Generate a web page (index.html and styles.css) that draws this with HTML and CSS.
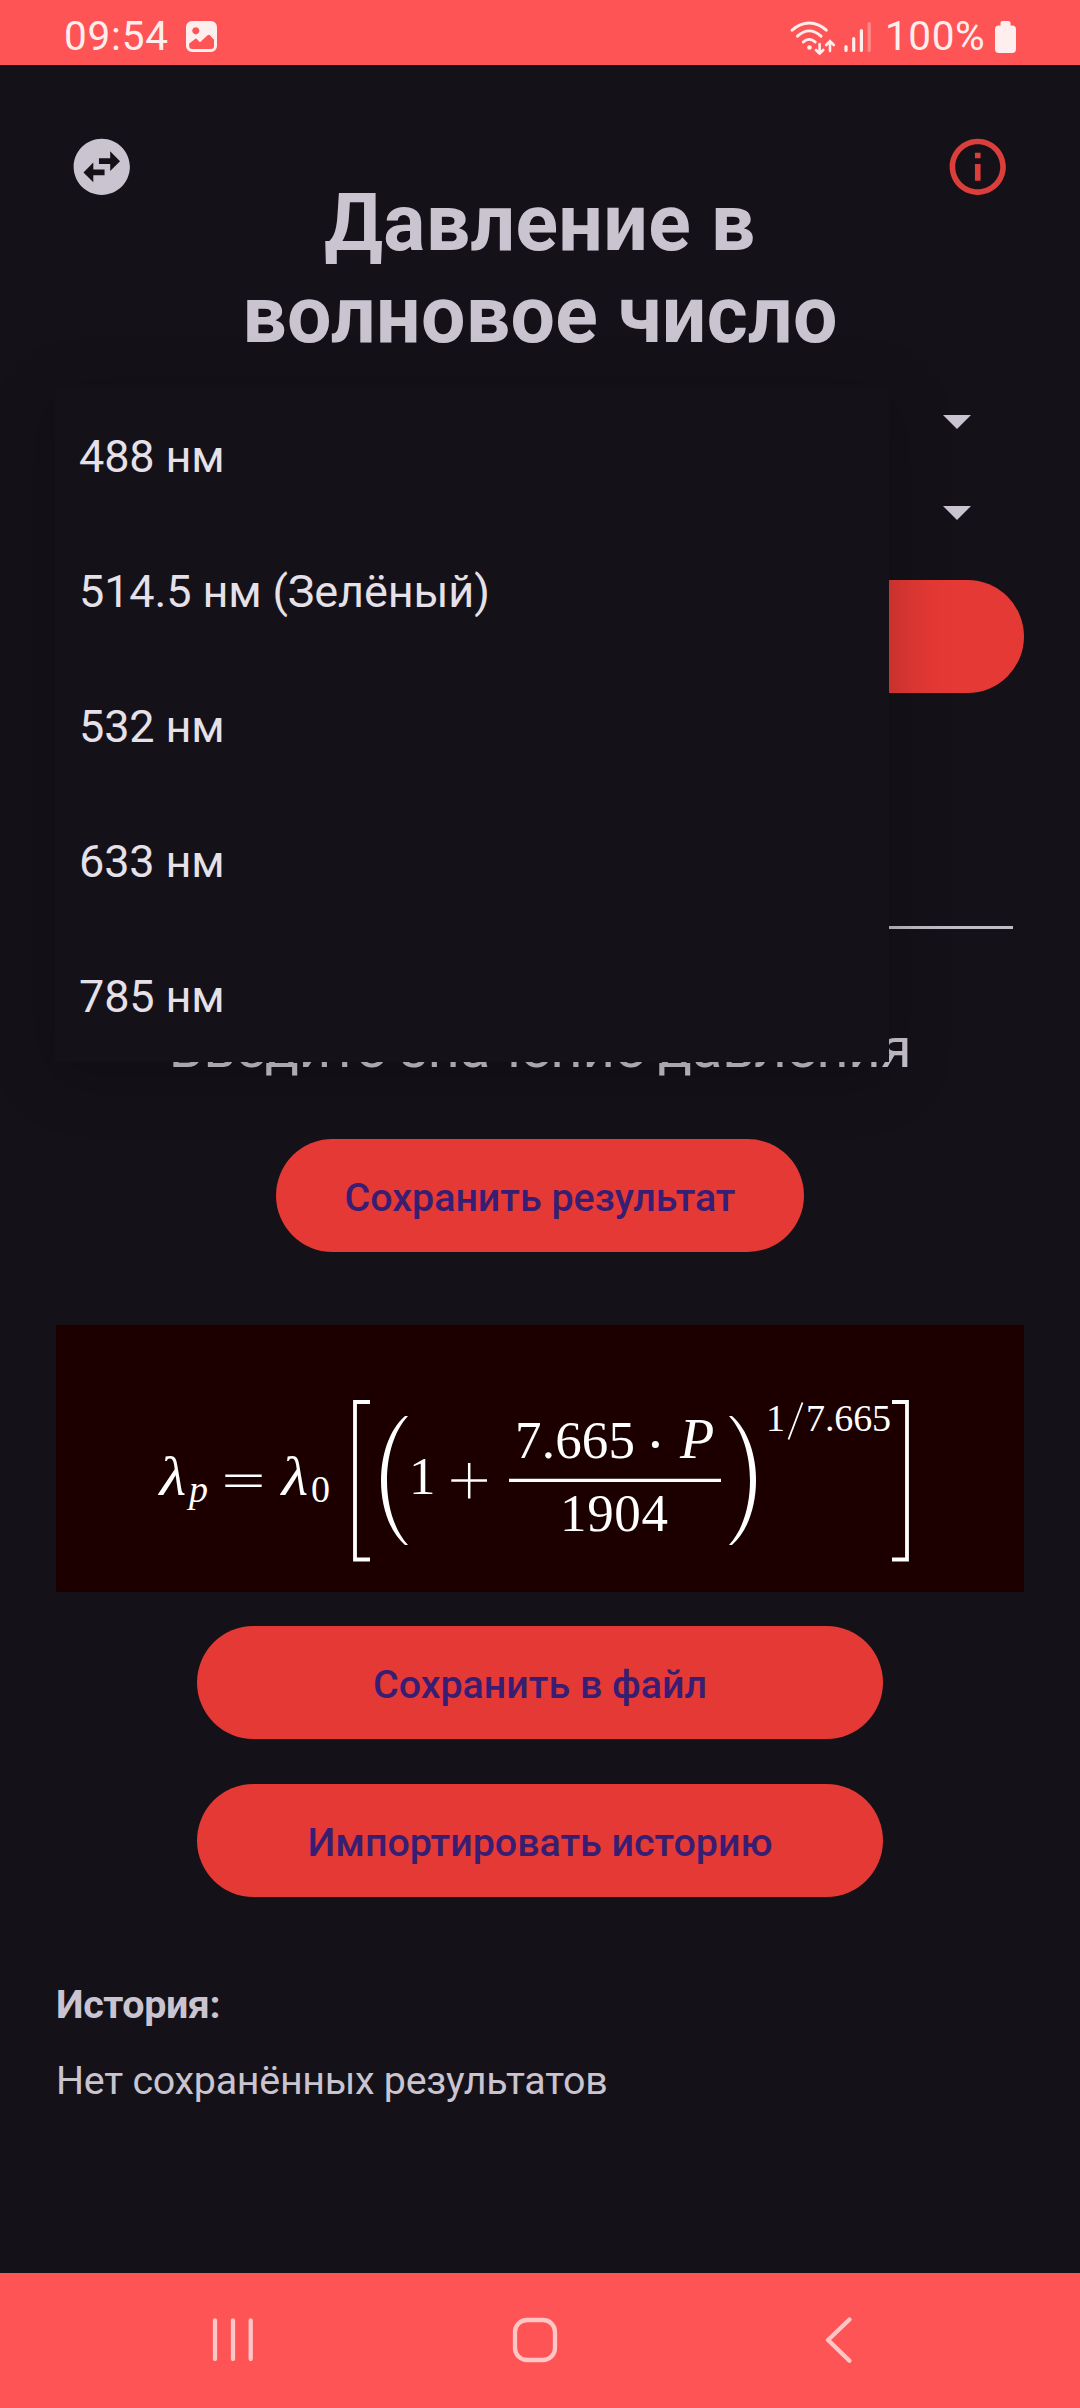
FILE: index.html
```html
<!DOCTYPE html>
<html lang="ru">
<head>
<meta charset="utf-8">
<title>Давление в волновое число</title>
<link rel="stylesheet" href="styles.css">
</head>
<body>
<div class="screen">
  <div class="status">
    <span class="time">09:54</span>
    <svg class="pic" width="31" height="31" viewBox="0 0 31 31"><path fill="#ffeeee" fill-rule="evenodd" d="M6 0H25a6 6 0 0 1 6 6V25a6 6 0 0 1-6 6H6a6 6 0 0 1-6-6V6a6 6 0 0 1 6-6ZM9.8 6.2a3.6 3.6 0 1 0 .01 0ZM3.2 22.5V25a3 3 0 0 0 3 3H25a3 3 0 0 0 3-3V18.800L23.800 14.300a1.500 1.500 0 0 0-2.200 0L14 21.300 11 18.200a1.500 1.500 0 0 0-2.200 0Z"/></svg>
    <div class="spacer"></div>
    <svg class="wifi" width="46" height="34" viewBox="0 0 46 34" fill="none" stroke="#ffeeee" stroke-linecap="round">
      <g stroke-width="3"><path d="M2.200 9.200C12.500-.4 26-.4 36.300 9.200"/><path d="M7.500 15.200C15 8.300 23.500 8.300 31 15.200"/><path d="M13.300 21C17 17.600 21.500 17.600 25.200 21"/></g>
      <circle cx="19.500" cy="26.500" r="2.300" fill="#ffeeee" stroke="none"/>
      <path stroke-width="2.600" d="M29.600 23V32.500M26 29l3.600 3.600L33.200 29M40 30V20M36.200 24l3.800-3.900L43.800 24"/>
    </svg>
    <svg class="signal" width="28" height="32" viewBox="0 0 28 32" stroke="#ffeeee" stroke-width="3.200" stroke-linecap="round"><path d="M2 25.500V29.500M9.700 17.500V29.500M17.400 9.500V29.500"/><path opacity=".35" d="M25.200 2.500V29.500"/></svg>
    <span class="level">100%</span>
    <svg class="battery" width="21" height="32" viewBox="0 0 21 32" fill="#ffeeee"><rect y="4.500" width="21" height="27.500" rx="4"/><rect x="5.500" width="10" height="8" rx="2"/></svg>
  </div>

  <main class="content">
    <header class="head">
      <svg class="icon" viewBox="0 0 24 24" fill="#cac4d0"><path d="M22 12c0-5.520-4.480-10-10-10S2 6.480 2 12s4.480 10 10 10 10-4.480 10-10zm-7-5.500l3.500 3.500-3.500 3.500V11h-4V9h4V6.500zm-6 11L5.500 14 9 10.500V13h4v2H9v2.500z"/></svg>
      <h1 class="title">Давление в<br>волновое число</h1>
      <svg class="icon" viewBox="0 0 24 24" fill="#dc3f3b"><path d="M11 7h2v2h-2zm0 4h2v6h-2zm1-9C6.480 2 2 6.480 2 12s4.480 10 10 10 10-4.480 10-10S17.520 2 12 2zm0 18c-4.410 0-8-3.590-8-8s3.590-8 8-8 8 3.590 8 8-3.590 8-8 8z"/></svg>
    </header>

    <section class="form">
      <div class="spinner"><i class="caret"></i></div>
      <div class="spinner"><i class="caret"></i></div>
      <div class="button wide"></div>
      <div class="field"></div>
      <p class="result">Введите значение давления</p>
      <div class="popup">
        <div class="option">488 нм</div>
        <div class="option">514.5 нм (Зелёный)</div>
        <div class="option">532 нм</div>
        <div class="option">633 нм</div>
        <div class="option">785 нм</div>
      </div>
    </section>

    <div class="button save">Сохранить результат</div>

    <svg class="formula" viewBox="56 1325 968 267" fill="#fff">
      <g class="math">
        <text class="it" transform="translate(159.500 1494.500) scale(1.120 1)" font-size="55">λ</text>
        <text class="it" x="189" y="1501.700" font-size="38">p</text>
        <text class="it" transform="translate(281.500 1494.500) scale(1.120 1)" font-size="55">λ</text>
        <text x="311" y="1501.700" font-size="38">0</text>
        <text x="409" y="1494" font-size="53">1</text>
        <text x="515" y="1458" font-size="53" textLength="120">7.665</text>
        <text class="it" x="680" y="1458" font-size="56">P</text>
        <text x="560" y="1530.700" font-size="53" textLength="108">1904</text>
        <text x="766" y="1431" font-size="38">1</text>
        <text x="806" y="1431" font-size="38" textLength="85">7.665</text>
      </g>
      <circle cx="655.400" cy="1444.500" r="3.500"/>
      <path d="M405 1416H408C380 1446 380 1515 408 1545H405C373 1517 373 1444 405 1416Z"/>
      <path d="M732 1416H729C757 1446 757 1515 729 1545H732C764 1517 764 1444 732 1416Z"/>
      <g fill="none" stroke="#fff" stroke-width="2.500">
        <path d="M225.300 1475.700H261.700M225.300 1485.700H261.700M451.300 1480.500H487M469.200 1463V1498.500"/>
        <path stroke-width="1.800" d="M802.500 1402.500L788.500 1439.500"/>
        <path stroke-width="3.200" d="M509 1480.400H721"/>
        <path stroke-width="3.800" d="M370 1402H355V1559.500H370M892 1402H907V1559.500H892"/>
      </g>
    </svg>

    <div class="button file">Сохранить в файл</div>
    <div class="button import">Импортировать историю</div>

    <h2 class="history">История:</h2>
    <p class="empty">Нет сохранённых результатов</p>
  </main>

  <nav class="nav">
    <svg width="1080" height="135" viewBox="0 0 1080 135" fill="none" stroke="#ffc6c6" stroke-width="4.300" stroke-linecap="round">
      <path d="M215 47.500V86M233 47.500V86M250.700 47.500V86"/>
      <rect x="515" y="47" width="40" height="40" rx="12"/>
      <path stroke-linejoin="round" d="M849.500 46.500L828 67 849.500 87.800"/>
    </svg>
  </nav>
</div>
</body>
</html>
```
FILE: styles.css
```css
* { box-sizing: border-box; }
body { margin: 0; background: #141218; }
h1, h2, p { margin: 0; }
svg { display: block; flex: none; }

.screen {
  width: 1080px;
  height: 2408px;
  display: flex;
  flex-direction: column;
  overflow: hidden;
  background: #141218;
  color: #cac4d0;
  font-family: Roboto, "Noto Sans", sans-serif;
}

.status {
  height: 65px;
  flex: none;
  display: flex;
  align-items: flex-start;
  padding: 21px 64px 0 64px;
  background: #ff5455;
  color: #ffeeee;
  font-size: 40.500px;
  line-height: 46px;
}
.time { width: 122px; margin-top: -8px; letter-spacing: .8px; }
.spacer { flex: 1; }
.wifi { margin-right: 8px; }
.signal { margin-right: 13px; }
.level { width: 110px; margin-top: -8px; white-space: nowrap; letter-spacing: .6px; }

.content { flex: 1; padding: 0 56px; }
.head {
  display: flex;
  justify-content: space-between;
  align-items: flex-start;
  padding: 68px 12px 0;
}
.icon { width: 67.500px; height: 67.500px; }
.title {
  margin-top: 44px;
  font-size: 78.750px;
  line-height: 92px;
  font-weight: 700;
  letter-spacing: .3px;
  text-align: center;
}

.form { position: relative; height: 778px; padding-top: 27px; }
.spinner {
  height: 67px;
  margin-bottom: 24px;
  display: flex;
  align-items: center;
  justify-content: flex-end;
  padding-right: 53px;
}
.caret {
  border: 14px solid transparent;
  border-top-color: #cac4d0;
  border-bottom: 0;
}
.field {
  height: 124px;
  margin: 112px 11px 0;
  border-bottom: 3px solid #c0bcc6;
}
.result {
  margin-top: 86px;
  font-size: 56.250px;
  line-height: 66px;
  letter-spacing: -.2px;
  text-align: center;
}
.popup {
  position: absolute;
  left: -1px;
  top: 26px;
  width: 834px;
  height: 675px;
  background: #141218;
  box-shadow: 0 12px 56px rgba(0, 0, 0, .25);
}
.option {
  height: 135px;
  padding: 2px 0 0 24px;
  font-size: 45px;
  line-height: 135px;
  letter-spacing: -.13px;
  color: #e6e0e9;
}

.button {
  height: 113px;
  margin: 0 auto;
  padding-top: 4px;
  border-radius: 57px;
  background: #e53935;
  color: #381e72;
  font-size: 39.400px;
  line-height: 110px;
  font-weight: 500;
  text-align: center;
}
.wide { margin-top: 34px; }
.save { width: 528px; }
.file, .import { width: 686px; }
.import { margin-top: 45px; }

.formula {
  width: 968px;
  height: 267px;
  margin: 73px 0 34px;
  background: #1c0000;
}
.math { font-family: "Liberation Serif", serif; }
.it { font-style: italic; }

.history {
  margin-top: 85px;
  font-size: 39.400px;
  line-height: 46px;
  font-weight: 700;
  letter-spacing: -.4px;
}
.empty {
  margin-top: 30px;
  font-size: 39.400px;
  line-height: 46px;
  letter-spacing: -.27px;
}

.nav { height: 135px; flex: none; background: #ff5455; }
```
